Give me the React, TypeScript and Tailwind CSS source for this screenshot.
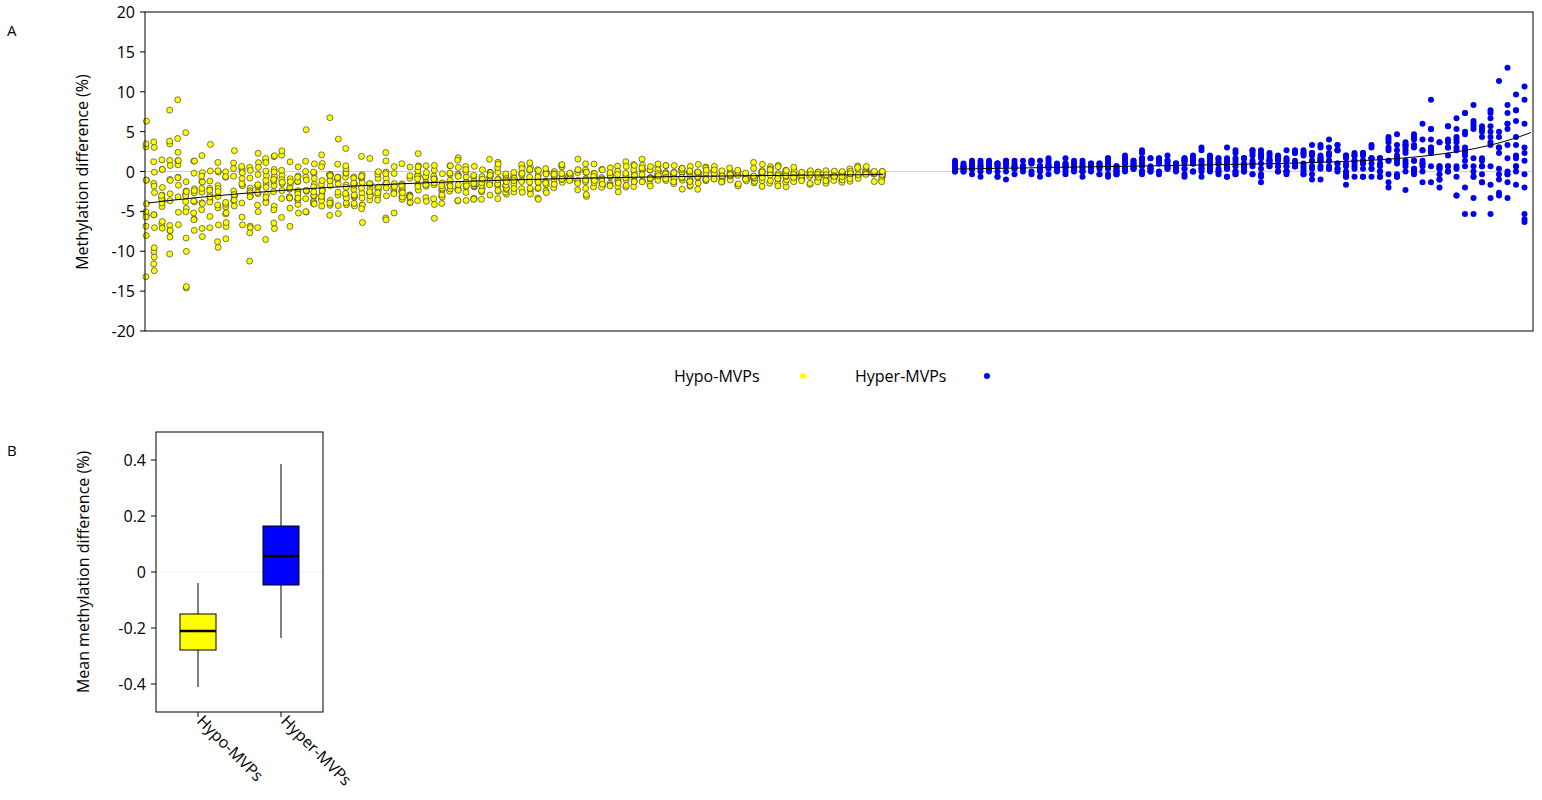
import React from "react";

function rng(seed: number) {
  let s = seed;
  return () => {
    s = (s * 1664525 + 1013904223) % 4294967296;
    return s / 4294967296;
  };
}
function gauss(r: () => number) {
  const u = Math.max(r(), 1e-9), v = r();
  return Math.sqrt(-2 * Math.log(u)) * Math.cos(2 * Math.PI * v);
}

const Y0 = 171.5;
const K = 7.975;
const yv = (v: number) => Y0 - v * K;

const yMean = (x: number) => {
  const t = (x - 145) / 740;
  return -0.2 - 3.8 * Math.exp(-3 * t);
};
const bMean = (x: number) => {
  const t = (x - 953) / 580;
  return 0.3 + 1.2 * t + 3.5 * Math.pow(t, 8);
};

function genYellow() {
  const r = rng(7);
  const pts: [number, number][] = [];
  for (let x = 146; x <= 885; x += 8) {
    const t = (x - 145) / 740;
    const sd = 0.4 + 4.3 * Math.exp(-3.5 * t);
    const n = Math.round(6 + 5 * (1 - t) + r() * 4);
    for (let i = 0; i < n; i++) {
      let v = yMean(x) + gauss(r) * sd;
      v = Math.max(-18, Math.min(9, v));
      pts.push([x + (r() - 0.5) * 1, yv(v)]);
    }
  }
  return pts;
}
function genBlue() {
  const r = rng(13);
  const pts: [number, number][] = [];
  for (let x = 955; x <= 1532; x += 8.5) {
    const t = (x - 953) / 580;
    const sd = 0.5 + 1.8 * t * t + 3.5 * Math.pow(t, 10);
    const n = Math.round(6 + 4 * t + r() * 3);
    for (let i = 0; i < n; i++) {
      let v = bMean(x) + gauss(r) * sd;
      v = Math.max(-13.5, Math.min(19, v));
      pts.push([x, yv(Math.round(v * 3) / 3)]);
    }
  }
  return pts;
}

const yellow = genYellow();
const blue = genBlue();

function curve(f: (x: number) => number, a: number, b: number) {
  let d = "";
  for (let x = a; x <= b; x += 3) d += (x === a ? "M" : "L") + x + " " + yv(f(x)).toFixed(1) + " ";
  return d;
}
const yCurve = curve(yMean, 148, 884);
const bCurve = curve(bMean, 955, 1532);

const font = { fontFamily: '"Open Sans", "Noto Sans", sans-serif' };

export default function App() {
  const ticksA = [20, 15, 10, 5, 0, -5, -10, -15, -20];
  const ticksB: [number, string][] = [[0.4, "0.4"], [0.2, "0.2"], [0, "0"], [-0.2, "-0.2"], [-0.4, "-0.4"]];
  const yb = (v: number) => 572 - v * 280;
  return (
    <div className="w-[1542px] h-[800px] bg-white" style={font}>
      <svg width="1542" height="800" className="block">
        <text x="7" y="36" fontSize="15">A</text>
        <text x="7" y="456" fontSize="15">B</text>
        <line x1="145" y1={Y0} x2="1533" y2={Y0} stroke="#d0d0d0" strokeWidth="1" />
        {yellow.map(([x, y], i) => (
          <circle key={"y" + i} cx={x} cy={y} r="3" fill="#ffff00" stroke="#222" strokeWidth="0.6" />
        ))}
        {blue.map(([x, y], i) => (
          <circle key={"b" + i} cx={x} cy={y} r="3" fill="#0000ee" />
        ))}
        <path d={yCurve} fill="none" stroke="#000" strokeWidth="1" />
        <path d={bCurve} fill="none" stroke="#000" strokeWidth="1" />
        <rect x="145" y="12" width="1388" height="319" fill="none" stroke="#000" strokeWidth="1" />
        {ticksA.map((t) => (
          <g key={t}>
            <line x1="140" x2="145" y1={yv(t)} y2={yv(t)} stroke="#000" />
            <text x="135" y={yv(t) + 6} fontSize="16" textAnchor="end">{t}</text>
          </g>
        ))}
        <text transform="translate(88,172) rotate(-90)" fontSize="16" textAnchor="middle">Methylation difference (%)</text>
        <text x="674" y="382" fontSize="16">Hypo-MVPs</text>
        <circle cx="803" cy="376" r="3" fill="#ffff00" />
        <text x="855" y="382" fontSize="16">Hyper-MVPs</text>
        <circle cx="987" cy="376" r="3" fill="#0000ee" />
        <line x1="156" x2="323" y1="572" y2="572" stroke="#eee" />
        <rect x="156" y="432" width="167" height="280" fill="none" stroke="#000" />
        {ticksB.map(([t, l]) => (
          <g key={l}>
            <line x1="151" x2="156" y1={yb(t)} y2={yb(t)} stroke="#000" />
            <text x="146" y={yb(t) + 6} fontSize="16" textAnchor="end">{l}</text>
          </g>
        ))}
        <text transform="translate(89,572) rotate(-90)" fontSize="16" textAnchor="middle">Mean methylation difference (%)</text>
        <line x1="198" x2="198" y1="583" y2="687" stroke="#000" />
        <rect x="180" y="614" width="36" height="36" fill="#ffff00" stroke="#000" />
        <line x1="180" x2="216" y1="631" y2="631" stroke="#000" strokeWidth="2.5" />
        <line x1="281" x2="281" y1="464" y2="638" stroke="#000" />
        <rect x="263" y="526" width="36" height="59" fill="#0000ff" stroke="#000" />
        <line x1="263" x2="299" y1="556" y2="556" stroke="#000" strokeWidth="2.5" />
        <line x1="198" x2="198" y1="712" y2="717" stroke="#000" />
        <line x1="281" x2="281" y1="712" y2="717" stroke="#000" />
        <text transform="translate(196,722) rotate(45)" fontSize="16">Hypo-MVPs</text>
        <text transform="translate(280,722) rotate(45)" fontSize="16">Hyper-MVPs</text>
      </svg>
    </div>
  );
}
